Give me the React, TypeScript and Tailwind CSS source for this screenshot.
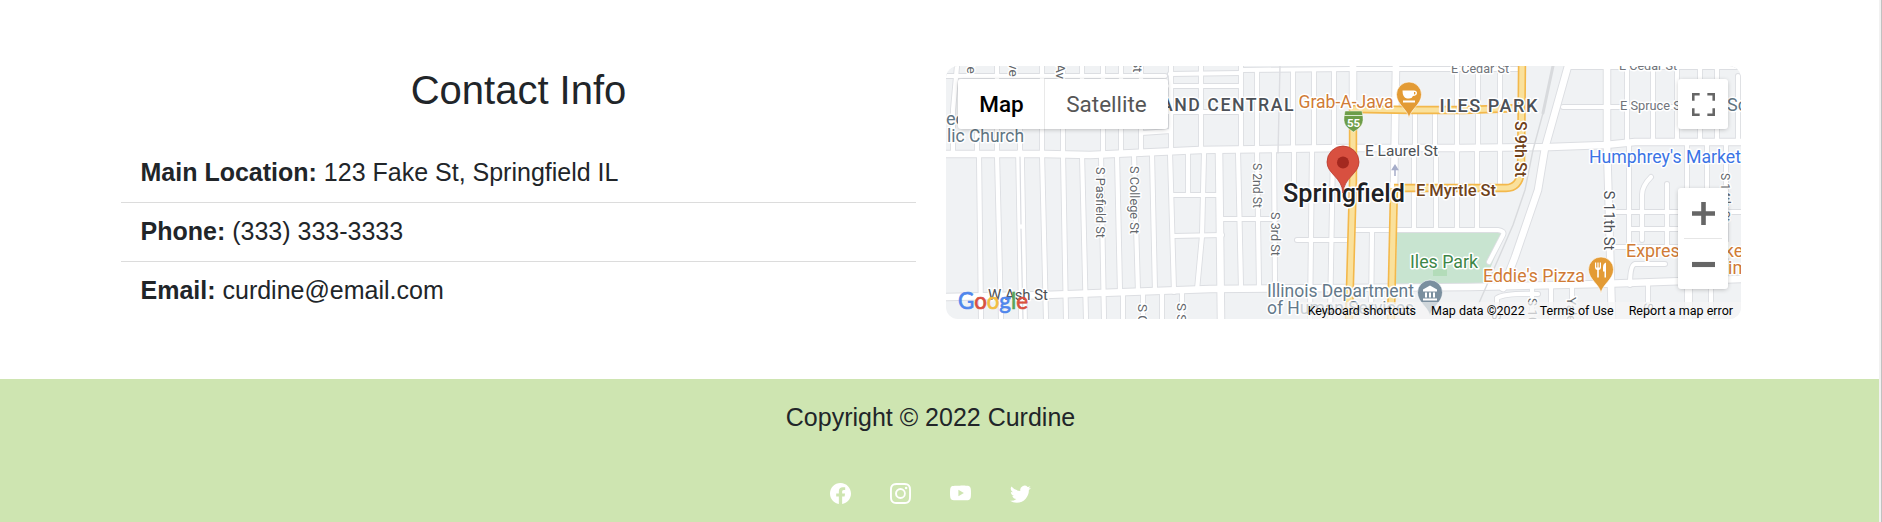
import React from "react";
import { BsFacebook, BsInstagram, BsYoutube, BsTwitter } from "react-icons/bs";

const minorRoads = [
  // north-west blocks
  "M946 76H1165", "M1170 74L1241 73", "M1170 86H1241", "M1241 70L1352 69H1522", "M1141 133L1171 131", "M1165 112H1241",
  "M957 66L953 110V154", "M972 66V76", "M977 110V154", "M997 66V154", "M1014 66V76", "M1020 110V154",
  "M1042 66V154", "M1063 66V154", "M1082 66V85", "M1103 66V154", "M1121 66V154", "M1141 66V154",
  "M1171 66V152", "M1201 66V151", "M1241 66V150", "M1257 70V149", "M1293 70V149", "M1314 70V149",
  "M1334 70V149", "M1415 110V148", "M1435 110V148", "M1457 66V148", "M1478 66V148", "M1500 66V148",
  // south-west blocks
  "M979 154L981 319", "M997 154L1001 319", "M1042 154L1046 319", "M1063 154L1066 319",
  "M1082 154L1086 319", "M1101 154L1104 319", "M1117 154L1120 292", "M1134 154L1138 292",
  "M1152 154L1155 292", "M1170 153L1174 292", "M1188 153V195", "M1204 153L1202 236L1197 290",
  "M1172 195H1220", "M1174 236L1222 235", "M1220 219H1276",
  "M1123 293V319", "M1143 293V319", "M1162 293V319", "M1182 293V319",
  "M1238 151L1241 288", "M1257 151L1259 288", "M1274 151L1275 288", "M1294 151V190",
  "M1312 151L1310 319", "M1333 151L1330 319", "M1297 240H1347", "M1372 230L1371 319",
  "M1414 148V229", "M1436 148V229", "M1457 148V229", "M1477 148V229", "M1500 148V184",
  "M1354 230H1498Q1505 231 1503 235L1489 262",
  // east blocks
  "M1570 67H1741", "M1563 107H1680", "M1627 66V144", "M1653 66V143", "M1677 66V143",
  "M1700 66V143", "M1717 66V143", "M1738 76V143", "M1687 144V319", "M1707 144V190",
  "M1726 144V280", "M1651 177Q1642 186 1642 195V240", "M1667 184V247", "M1629 144V247",
  "M1613 212H1741", "M1630 229H1680", "M1612 247H1680", "M1665 264H1635Q1630 265 1630 285",
  "M1497 319V298Q1505 293 1538 294", "M1532 287V319", "M1551 287V319", "M1572 287V319",
  "M1648 284V319", "M1690 283V319", "M1711 282V319",
];

const mainRoads = [
  "M946 154H1045L1090 155L1200 150L1345 148L1460 148L1550 147L1605 145L1635 142H1741",
  "M946 297L1045 295L1210 289L1345 288L1470 287L1600 284L1741 279",
  "M1219 151L1221 319", "M1353 66V112", "M1396 66L1394 190", "M1607 66V144L1612 319",
  "M1568 66L1545 148L1538 190L1515 257L1503 288",
];

const goldRoads = [
  "M1353 109L1410 110H1464L1522 108",
  "M1522 66L1521 172Q1519 188 1506 188H1394",
  "M1353 109V180L1349 319",
  "M1394 188L1391 319",
];

function Label({ x, y, w, size = 15, color = "#5f6368", weight = 400, children }: {
  x: number; y: number; w?: number; size?: number; color?: string; weight?: number; children: React.ReactNode;
}) {
  return (
    <text x={x} y={y} fontSize={size} fill={color} fontWeight={weight} textLength={w} lengthAdjust="spacingAndGlyphs"
      stroke="#fff" strokeWidth={3} strokeLinejoin="round" paintOrder="stroke">{children}</text>
  );
}

function StreetLabel({ x, y, w, size = 13.5, color = "#63676c", weight = 400, children }: {
  x: number; y: number; w?: number; size?: number; color?: string; weight?: number; children: React.ReactNode;
}) {
  return (
    <g transform={`translate(${x - size * 0.35} ${y}) rotate(90)`}>
      <Label x={0} y={0} w={w} size={size} color={color} weight={weight}>{children}</Label>
    </g>
  );
}

function Pin({ x, y, color, children }: { x: number; y: number; color: string; children: React.ReactNode }) {
  return (
    <g transform={`translate(${x} ${y})`}>
      <path d="M0 24C-1 15 -12.5 10 -12.5 0A12.5 12.5 0 0 1 12.5 0C12.5 10 1 15 0 24Z" fill={color} stroke="#fff" strokeWidth="0.6" />
      {children}
    </g>
  );
}

function StreetMap() {
  return (
    <svg viewBox="946 66 795 253" className="block h-full w-full" fontFamily="Roboto, sans-serif">
      <rect x="946" y="66" width="795" height="253" fill="#f0f2f4" />
      <path d="M1397 233H1501L1503 236L1484 284H1396Z" fill="#c8e4d0" />
      <path d="M1433 269H1447V276H1433Z" fill="#b3dcb9" />
      <g fill="none" strokeLinejoin="round" strokeLinecap="round">
        <g stroke="#dcdee2">
          {minorRoads.map((d) => <path key={d} d={d} strokeWidth="6" />)}
          {mainRoads.map((d) => <path key={d} d={d} strokeWidth="8.5" />)}
          <path d="M1020 154L1023 319" strokeWidth="9.5" />
        </g>
        <g stroke="#fff">
          {minorRoads.map((d) => <path key={d} d={d} strokeWidth="4.2" />)}
          {mainRoads.map((d) => <path key={d} d={d} strokeWidth="6.6" />)}
          <path d="M1020 154L1023 319" strokeWidth="7.8" />
        </g>
        <path d="M1020 157L1021 224M1021 229L1023 319" stroke="#dadce1" strokeWidth="1.2" />
        <path d="M1280 66L1278 153" stroke="#dcdde1" strokeWidth="1.4" />
        <path d="M1553 66L1543 113" stroke="#d8dadd" strokeWidth="3" />
        <path d="M1543 113L1533 150L1525 190L1513 225L1500 255L1479 303" stroke="#d8dadd" strokeWidth="1.4" />
        {goldRoads.map((d) => <path key={d} d={d} stroke="#f3b84b" strokeWidth="8.4" strokeLinecap="butt" />)}
        {goldRoads.map((d) => <path key={d} d={d} stroke="#fae19c" strokeWidth="5.2" strokeLinecap="butt" />)}
      </g>
      <path d="M1395 176V168M1392.500 169.500L1395 165.500L1397.500 169.500Z" fill="#a6adc9" stroke="#a6adc9" strokeWidth="1.500" />

      <StreetLabel x={972} y={60}>ve</StreetLabel>
      <StreetLabel x={1014} y={63}>ve</StreetLabel>
      <StreetLabel x={1061} y={64}>Av</StreetLabel>
      <StreetLabel x={1138} y={60}>St</StreetLabel>
      <StreetLabel x={1101} y={167} w={71}>S Pasfield St</StreetLabel>
      <StreetLabel x={1135} y={166} w={68}>S College St</StreetLabel>
      <StreetLabel x={1258} y={163} w={45}>S 2nd St</StreetLabel>
      <StreetLabel x={1276} y={212} w={44}>S 3rd St</StreetLabel>
      <StreetLabel x={1143} y={304}>S College St</StreetLabel>
      <StreetLabel x={1182} y={303}>S Spring St</StreetLabel>
      <StreetLabel x={1533} y={298}>S 10th St</StreetLabel>
      <StreetLabel x={1572} y={297}>Yale Blvd</StreetLabel>
      <StreetLabel x={1497} y={312}>S 9th St</StreetLabel>
      <StreetLabel x={1648} y={303} size={12}>St</StreetLabel>
      <StreetLabel x={1726} y={173} w={49}>S 14th St</StreetLabel>
      <StreetLabel x={1609.5} y={190.5} w={60} size={15.5} color="#4c5055">S 11th St</StreetLabel>
      <StreetLabel x={1521} y={121} w={56} size={16} color="#70421b" weight={500}>S 9th St</StreetLabel>

      <Label x={946} y={125} size={18} color="#5f7583">ec</Label>
      <Label x={947} y={142} w={77} size={18} color="#5f7583">lic Church</Label>
      <g letterSpacing="1.5">
        <Label x={1161} y={111} w={134} size={17.5} color="#4c5158" weight={500}>AND CENTRAL</Label>
        <Label x={1439.5} y={112} w={99.5} size={17.5} color="#4c5158" weight={500}>ILES PARK</Label>
      </g>
      <Label x={1451} y={73} w={58} size={13} color="#70747a">E Cedar St</Label>
      <Label x={1619} y={70} w={58} size={13} color="#70747a">E Cedar St</Label>
      <Label x={1620} y={110} w={65} size={13.5} color="#70747a">E Spruce St</Label>
      <Label x={1727} y={111} size={18} color="#5f7583">School</Label>
      <Label x={1589} y={163} w={152} size={18} color="#3b74e5">Humphrey's Market</Label>
      <Label x={1365} y={155.5} w={73} size={15.5} color="#4c5055">E Laurel St</Label>
      <Label x={1416} y={195.5} w={80} size={16} color="#70421b" weight={500}>E Myrtle St</Label>
      <Label x={1410} y={267.5} w={68} size={17.5} color="#3d8748">Iles Park</Label>
      <Label x={988} y={299.5} w={60} size={15} color="#4c5055">W Ash St</Label>
      <Label x={1267} y={296.5} w={147} size={18} color="#64798a">Illinois Department</Label>
      <Label x={1267} y={314} w={147} size={18} color="#64798a">of Human Services</Label>
      <Label x={1298.5} y={107.5} w={95} size={18} color="#d07b35">Grab-A-Java</Label>
      <Label x={1483} y={282} w={102} size={18} color="#d07b35">Eddie's Pizza</Label>
      <Label x={1626} y={257} w={123} size={18} color="#d07b35">Express Market</Label>
      <Label x={1728} y={274} size={18} color="#d07b35">im</Label>
      <Label x={1283} y={202} w={122} size={25} color="#202124" weight={500}>Springfield</Label>

      <path d="M1345 111H1362L1363 117C1364 126 1358 129 1353.500 132C1349 129 1343 126 1344 117Z" fill="#6d9d49" stroke="#fff" strokeWidth="0.500" />
      <path d="M1344 115.500H1363" stroke="#dbe9d0" strokeWidth="1" />
      <text x="1353.500" y="127" textAnchor="middle" fontSize="11.500" fontWeight="700" fill="#fff">55</text>

      <Pin x={1409} y={94.5} color="#e39b35">
        <path d="M-6.500 -4H5Q8 -4 8 -1.500T4 1.500Q3 4 0 4H-2Q-6.500 3 -6.500 -4ZM5 -2.500V0Q6.500 0 6.500 -1.500T5 -2.500ZM-6 6H6V8H-6Z" fill="#fff" fillRule="evenodd" />
      </Pin>
      <Pin x={1601} y={269.5} color="#e39b35">
        <path d="M-6 -7V-2Q-6 0 -3.800 .5V8H-2.200V.5Q0 0 0 -2V-7H-1.200V-2H-2.400V-7H-3.600V-2H-4.800V-7ZM5 -7Q2 -6 2 -2V2H3.500V8H5Z" fill="#fff" />
      </Pin>
      <Pin x={1430} y={292.5} color="#7a8f9f">
        <path d="M0 -7L7 -3V-1H-7V-3ZM-5 0H-3V5H-5ZM-1 0H1V5H-1ZM3 0H5V5H3ZM-7 6H7V8H-7Z" fill="#fff" />
      </Pin>
      <path d="M1343 193C1342 177 1327 174 1327 162A16 16 0 0 1 1359 162C1359 174 1344 177 1343 193Z" fill="#d85040" stroke="#b93a2d" strokeWidth="0.800" />
      <circle cx="1343" cy="162.500" r="6" fill="#a3281f" />

      <text x="958" y="309" fontSize="24" fontFamily="Lato, sans-serif" textLength="70" lengthAdjust="spacingAndGlyphs" strokeWidth="0.700">
        <tspan fill="#4f86ec" stroke="#4f86ec">G</tspan>
        <tspan fill="#d9503f" stroke="#d9503f">o</tspan>
        <tspan fill="#f2bd42" stroke="#f2bd42">o</tspan>
        <tspan fill="#4f86ec" stroke="#4f86ec">g</tspan>
        <tspan fill="#58a55c" stroke="#58a55c">l</tspan>
        <tspan fill="#d9503f" stroke="#d9503f">e</tspan>
      </text>
    </svg>
  );
}

const contacts = [
  { name: "Main Location:", value: "123 Fake St, Springfield IL" },
  { name: "Phone:", value: "(333) 333-3333" },
  { name: "Email:", value: "curdine@email.com" },
];

const credits = ["Keyboard shortcuts", "Map data ©2022", "Terms of Use", "Report a map error"];

export default function App() {
  return (
    <div className="flex h-[522px] w-full overflow-hidden bg-white font-['Liberation_Sans',Arial,sans-serif] text-[#212529]">
      <div className="flex min-w-0 flex-1 flex-col">
        <main className="flex h-[379px] gap-[30px] pt-[66px] pl-[121px]">
          <section className="w-[795px]">
            <h2 className="h-[78px] text-center text-[40px] leading-[48px]">Contact Info</h2>
            <ul>
              {contacts.map((c) => (
                <li key={c.name} className="h-[59px] border-b border-[#dcdcdc] pl-[19.5px] text-[25px] leading-[56px] last:border-b-0">
                  <strong className="font-bold">{c.name}</strong> {c.value}
                </li>
              ))}
            </ul>
          </section>

          <section className="relative h-[253px] w-[795px] overflow-hidden rounded-[12px] font-[Roboto,sans-serif]">
            <StreetMap />
            <div className="absolute top-[13px] left-[12px] flex h-[50px] w-[210px] rounded-[3px] bg-white text-[22.5px] leading-[50px] shadow-[0_1px_5px_-1px_rgba(0,0,0,0.3)]">
              <button className="w-[87px] border-r border-[#e9e9e9] pl-px font-medium text-black">Map</button>
              <button className="flex-1 text-[#565656]">Satellite</button>
            </div>
            <button aria-label="Fullscreen" className="absolute top-[13px] right-[13px] flex h-[50px] w-[50px] items-center justify-center rounded-[3px] bg-white shadow-[0_1px_5px_-1px_rgba(0,0,0,0.3)]">
              <svg viewBox="0 0 18 18" className="size-[23px]" fill="#666"><path d="M0 0v6h2V2h4V0H0zm16 0h-4v2h4v4h2V0h-2zm0 16h-4v2h6v-6h-2v4zM2 12H0v6h6v-2H2v-4z" /></svg>
            </button>
            <div className="absolute top-[122px] right-[13px] flex h-[101px] w-[50px] flex-col items-center rounded-[3px] bg-white shadow-[0_1px_5px_-1px_rgba(0,0,0,0.3)]">
              <button aria-label="Zoom in" className="flex h-[50px] items-center">
                <svg viewBox="0 0 18 18" className="size-[23px]" fill="#666"><path d="M0 7.200H7.200V0H10.800V7.200H18V10.800H10.800V18H7.200V10.800H0Z" /></svg>
              </button>
              <div className="h-px w-[38px] bg-[#e6e6e6]" />
              <button aria-label="Zoom out" className="flex h-[50px] items-center">
                <svg viewBox="0 0 18 18" className="size-[23px]" fill="#666"><path d="M0 7H18V11H0Z" /></svg>
              </button>
            </div>
            <div className="absolute right-0 bottom-0 flex h-[17px] gap-[15px] bg-[#f5f5f5]/70 pr-[8px] pl-[8px] text-[12.5px] leading-[17px] whitespace-nowrap text-black">
              {credits.map((c) => <span key={c}>{c}</span>)}
            </div>
          </section>
        </main>

        <footer className="flex flex-1 flex-col items-center bg-[#cee5b1] pt-[19px] pr-[18px]">
          <p className="text-[25px] leading-[38px]">Copyright © 2022 Curdine</p>
          <div className="mt-[47px] flex gap-[39px] text-[21px] text-white">
            <BsFacebook />
            <BsInstagram />
            <BsYoutube />
            <BsTwitter />
          </div>
        </footer>
      </div>
      <div className="w-[3px] border-r border-[#c1c1c1] bg-[#f1f1f1]" />
    </div>
  );
}
